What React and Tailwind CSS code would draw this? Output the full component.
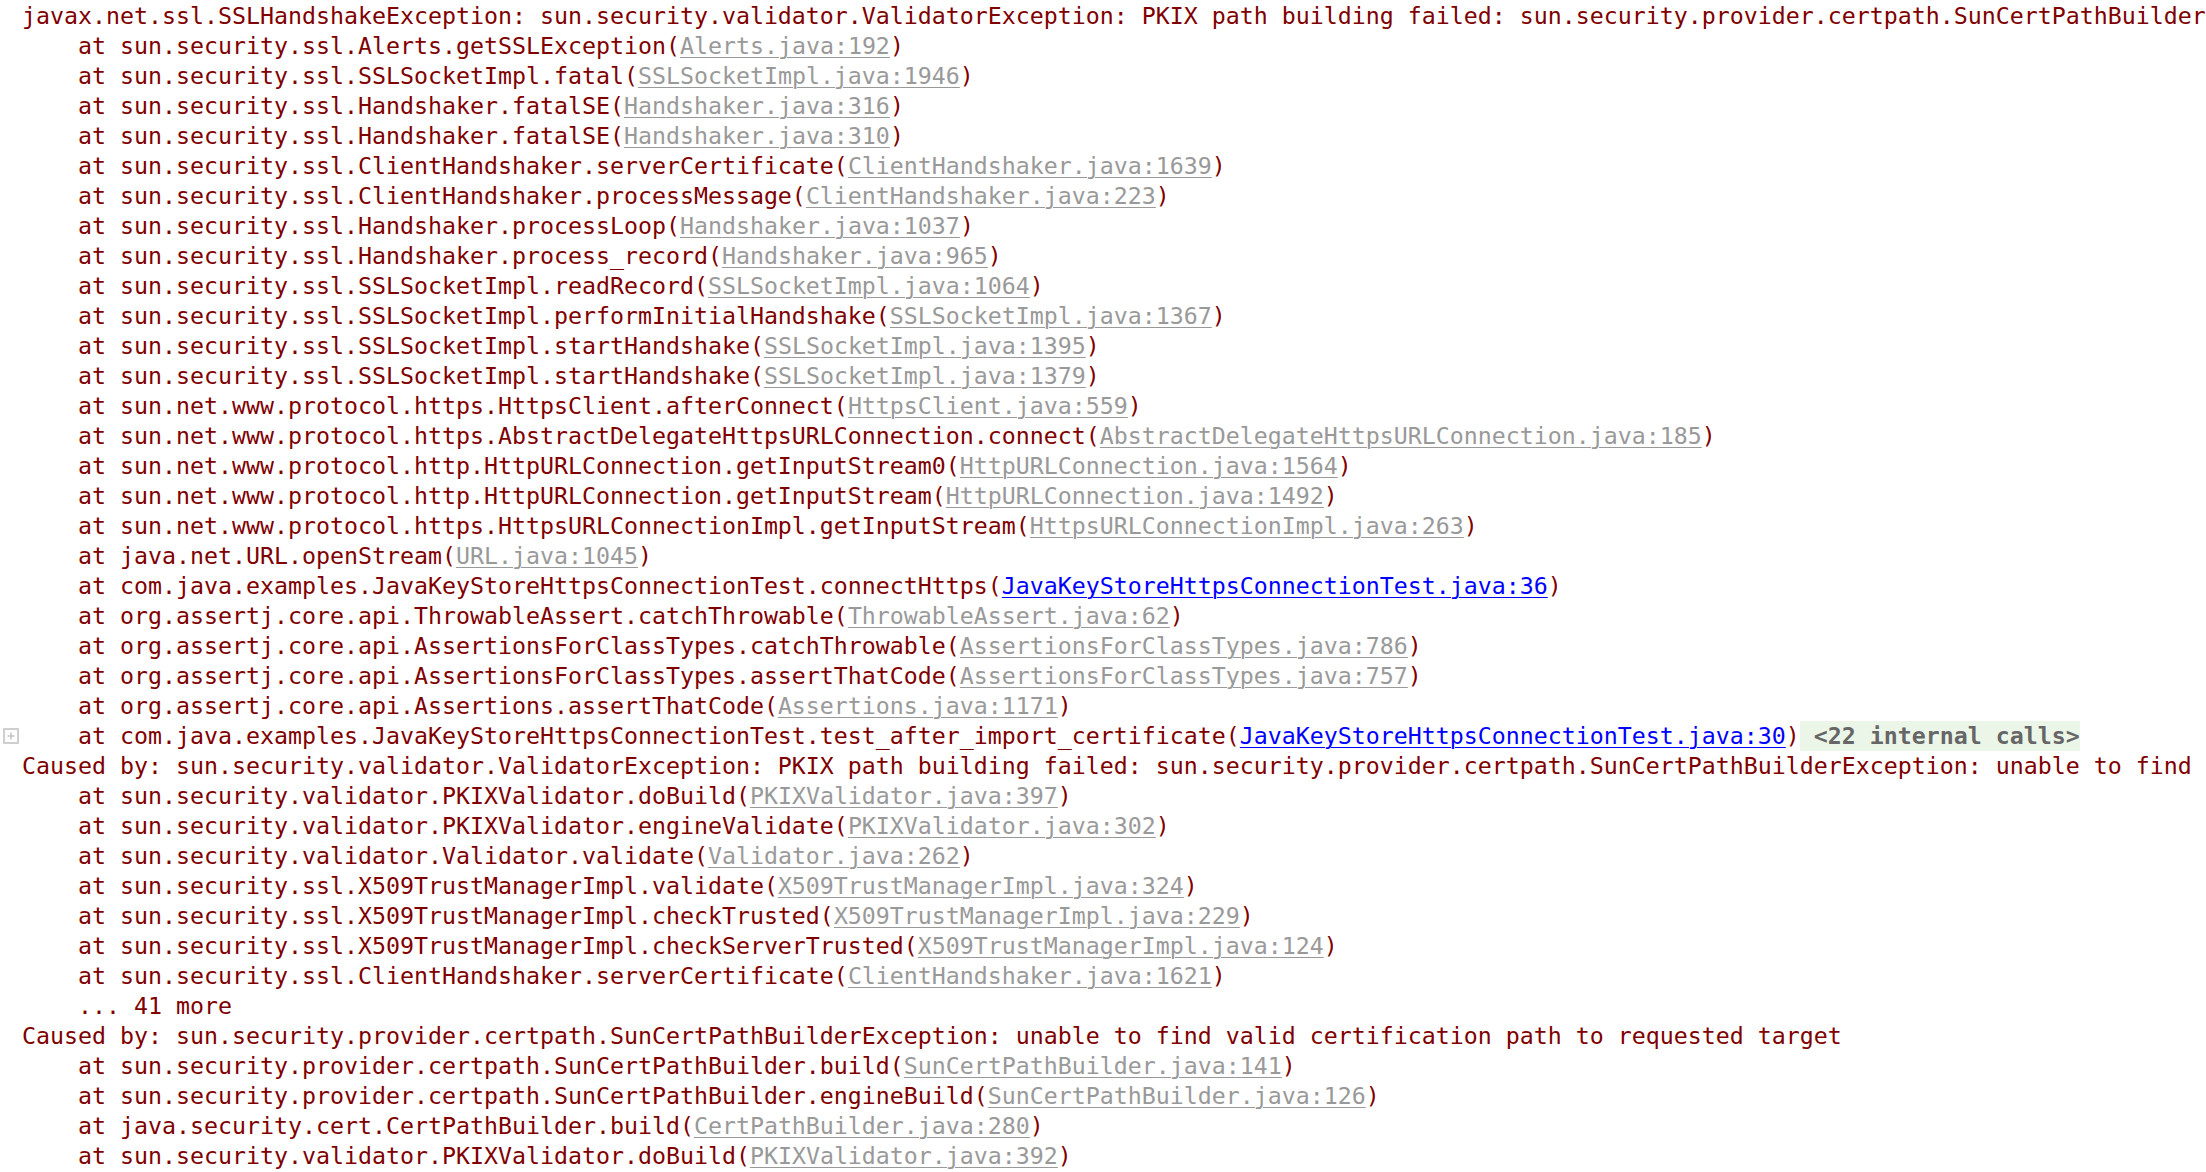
import React from "react";

const RED = "text-[#7f0000]";

const lines = [
  { t: "javax.net.ssl.SSLHandshakeException: sun.security.validator.ValidatorException: PKIX path building failed: sun.security.provider.certpath.SunCertPathBuilderException: unable to find valid certification path to requested target" },
  { a: "sun.security.ssl.Alerts.getSSLException", l: "Alerts.java:192" },
  { a: "sun.security.ssl.SSLSocketImpl.fatal", l: "SSLSocketImpl.java:1946" },
  { a: "sun.security.ssl.Handshaker.fatalSE", l: "Handshaker.java:316" },
  { a: "sun.security.ssl.Handshaker.fatalSE", l: "Handshaker.java:310" },
  { a: "sun.security.ssl.ClientHandshaker.serverCertificate", l: "ClientHandshaker.java:1639" },
  { a: "sun.security.ssl.ClientHandshaker.processMessage", l: "ClientHandshaker.java:223" },
  { a: "sun.security.ssl.Handshaker.processLoop", l: "Handshaker.java:1037" },
  { a: "sun.security.ssl.Handshaker.process_record", l: "Handshaker.java:965" },
  { a: "sun.security.ssl.SSLSocketImpl.readRecord", l: "SSLSocketImpl.java:1064" },
  { a: "sun.security.ssl.SSLSocketImpl.performInitialHandshake", l: "SSLSocketImpl.java:1367" },
  { a: "sun.security.ssl.SSLSocketImpl.startHandshake", l: "SSLSocketImpl.java:1395" },
  { a: "sun.security.ssl.SSLSocketImpl.startHandshake", l: "SSLSocketImpl.java:1379" },
  { a: "sun.net.www.protocol.https.HttpsClient.afterConnect", l: "HttpsClient.java:559" },
  { a: "sun.net.www.protocol.https.AbstractDelegateHttpsURLConnection.connect", l: "AbstractDelegateHttpsURLConnection.java:185" },
  { a: "sun.net.www.protocol.http.HttpURLConnection.getInputStream0", l: "HttpURLConnection.java:1564" },
  { a: "sun.net.www.protocol.http.HttpURLConnection.getInputStream", l: "HttpURLConnection.java:1492" },
  { a: "sun.net.www.protocol.https.HttpsURLConnectionImpl.getInputStream", l: "HttpsURLConnectionImpl.java:263" },
  { a: "java.net.URL.openStream", l: "URL.java:1045" },
  { a: "com.java.examples.JavaKeyStoreHttpsConnectionTest.connectHttps", l: "JavaKeyStoreHttpsConnectionTest.java:36", blue: true },
  { a: "org.assertj.core.api.ThrowableAssert.catchThrowable", l: "ThrowableAssert.java:62" },
  { a: "org.assertj.core.api.AssertionsForClassTypes.catchThrowable", l: "AssertionsForClassTypes.java:786" },
  { a: "org.assertj.core.api.AssertionsForClassTypes.assertThatCode", l: "AssertionsForClassTypes.java:757" },
  { a: "org.assertj.core.api.Assertions.assertThatCode", l: "Assertions.java:1171" },
  { a: "com.java.examples.JavaKeyStoreHttpsConnectionTest.test_after_import_certificate", l: "JavaKeyStoreHttpsConnectionTest.java:30", blue: true, fold: true, badge: "<22 internal calls>" },
  { t: "Caused by: sun.security.validator.ValidatorException: PKIX path building failed: sun.security.provider.certpath.SunCertPathBuilderException: unable to find valid certification path to requested target" },
  { a: "sun.security.validator.PKIXValidator.doBuild", l: "PKIXValidator.java:397" },
  { a: "sun.security.validator.PKIXValidator.engineValidate", l: "PKIXValidator.java:302" },
  { a: "sun.security.validator.Validator.validate", l: "Validator.java:262" },
  { a: "sun.security.ssl.X509TrustManagerImpl.validate", l: "X509TrustManagerImpl.java:324" },
  { a: "sun.security.ssl.X509TrustManagerImpl.checkTrusted", l: "X509TrustManagerImpl.java:229" },
  { a: "sun.security.ssl.X509TrustManagerImpl.checkServerTrusted", l: "X509TrustManagerImpl.java:124" },
  { a: "sun.security.ssl.ClientHandshaker.serverCertificate", l: "ClientHandshaker.java:1621" },
  { t: "    ... 41 more" },
  { t: "Caused by: sun.security.provider.certpath.SunCertPathBuilderException: unable to find valid certification path to requested target" },
  { a: "sun.security.provider.certpath.SunCertPathBuilder.build", l: "SunCertPathBuilder.java:141" },
  { a: "sun.security.provider.certpath.SunCertPathBuilder.engineBuild", l: "SunCertPathBuilder.java:126" },
  { a: "java.security.cert.CertPathBuilder.build", l: "CertPathBuilder.java:280" },
  { a: "sun.security.validator.PKIXValidator.doBuild", l: "PKIXValidator.java:392" },
];

function FoldIcon() {
  return (
    <svg width="16" height="16" viewBox="0 0 16 16" className="block">
      <rect x="1" y="1" width="14" height="14" fill="#ffffff" stroke="#cfcfcf" strokeWidth="2" />
      <path d="M4.5 8h7M8 4.5v7" stroke="#c4c4c4" strokeWidth="1.5" />
    </svg>
  );
}

function Line({ line }) {
  return (
    <div className="flex h-[30px] items-center">
      <div className="w-[22px] h-[30px] flex items-center pl-[3px] shrink-0">
        {line.fold ? <FoldIcon /> : null}
      </div>
      <div className={`whitespace-pre leading-[30px] ${RED}`}>
        {line.t !== undefined ? (
          line.t
        ) : (
          <>
            {"    at " + line.a + "("}
            <span
              className={
                line.blue
                  ? "text-[#0000ff] underline underline-offset-[3px] decoration-1"
                  : "text-[#999999] underline underline-offset-[3px] decoration-1"
              }
            >
              {line.l}
            </span>
            {")"}
            {line.badge ? (
              <span className="inline-block h-[30px] leading-[30px] bg-[#ebf6e8] text-[#666666] font-bold">
                {" " + line.badge}
              </span>
            ) : null}
          </>
        )}
      </div>
    </div>
  );
}

export default function App() {
  return (
    <div className="w-[2206px] h-[1172px] overflow-hidden bg-white pt-[1px] font-['DejaVu_Sans_Mono',monospace] text-[23.25px]">
      {lines.map((line, i) => (
        <Line key={i} line={line} />
      ))}
    </div>
  );
}
